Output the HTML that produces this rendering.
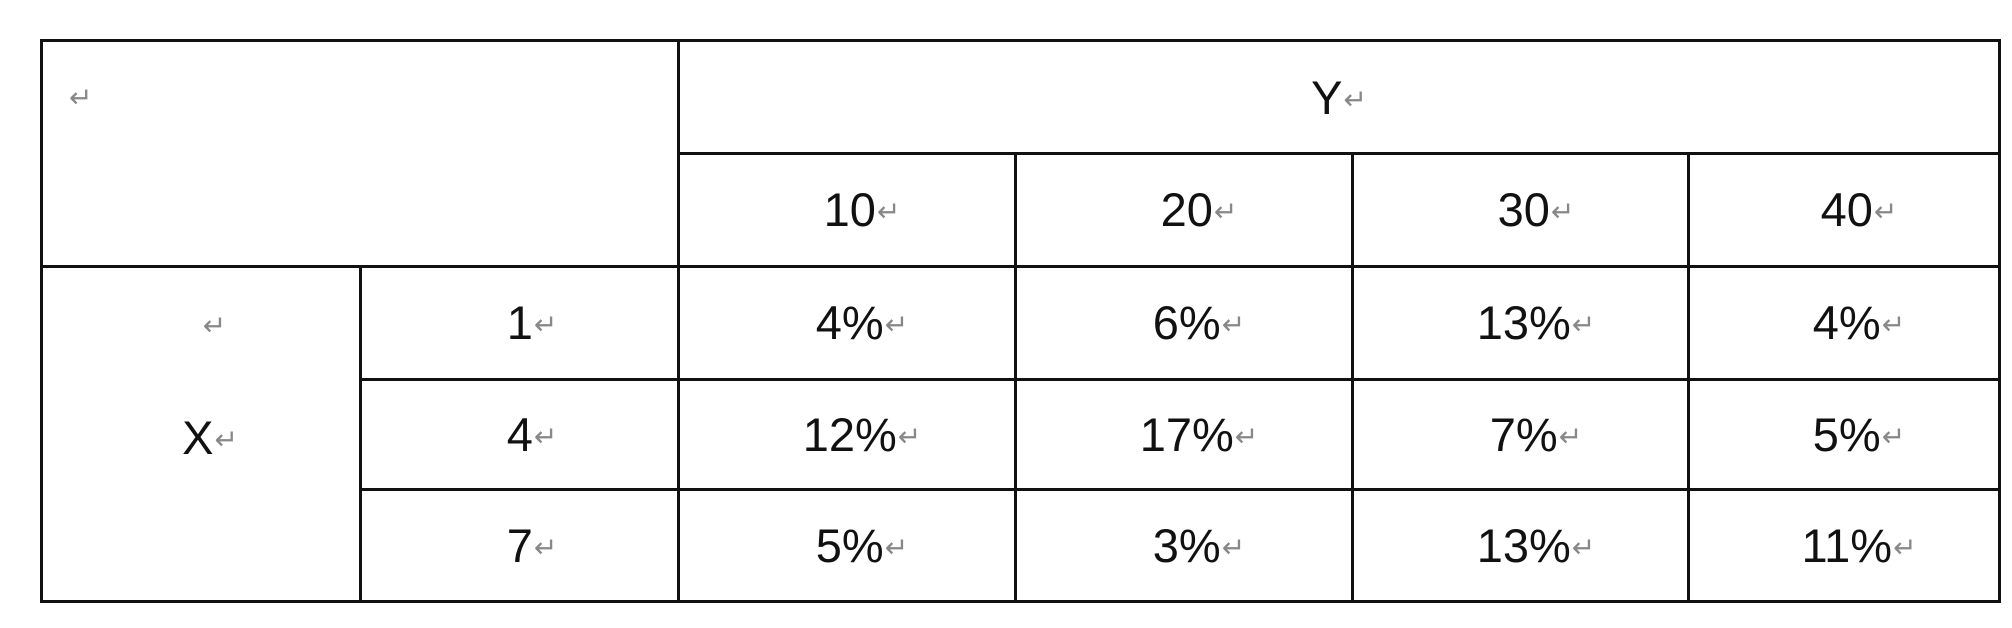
<!DOCTYPE html>
<html><head><meta charset="utf-8"><style>
body{margin:0;width:2012px;height:628px;background:#fff;position:relative;overflow:hidden;font-family:"Liberation Sans",Arial,sans-serif}
.h,.v{position:absolute;background:#111}
.h{height:3px}.v{width:3px}
.t{position:absolute;font-size:47px;color:#111;white-space:nowrap;transform:translateX(-50%);line-height:1}
.a{color:#888;font-size:28px;margin-left:1px;vertical-align:5px}
</style></head><body>
<div class="h" style="left:40px;width:1961px;top:39px"></div>
<div class="h" style="left:677px;width:1324px;top:152px"></div>
<div class="h" style="left:40px;width:1961px;top:265px"></div>
<div class="h" style="left:359px;width:1642px;top:378px"></div>
<div class="h" style="left:359px;width:1642px;top:488px"></div>
<div class="h" style="left:40px;width:1961px;top:600px"></div>
<div class="v" style="left:40px;top:39px;height:564px"></div>
<div class="v" style="left:359px;top:265px;height:338px"></div>
<div class="v" style="left:677px;top:39px;height:564px"></div>
<div class="v" style="left:1014px;top:152px;height:451px"></div>
<div class="v" style="left:1351px;top:152px;height:451px"></div>
<div class="v" style="left:1687px;top:152px;height:451px"></div>
<div class="v" style="left:1998px;top:39px;height:564px"></div>

<div class="t" style="left:68px;top:72px;transform:none"><span class="a">↵</span></div>
<div class="t" style="left:1339px;top:74px">Y<span class="a">↵</span></div>
<div class="t" style="left:214px;top:300px"><span class="a">↵</span></div>
<div class="t" style="left:210px;top:414px">X<span class="a">↵</span></div>

<div class="t" style="left:862px;top:186px">10<span class="a">↵</span></div>
<div class="t" style="left:1199px;top:186px">20<span class="a">↵</span></div>
<div class="t" style="left:1536px;top:186px">30<span class="a">↵</span></div>
<div class="t" style="left:1859px;top:186px">40<span class="a">↵</span></div>

<div class="t" style="left:532px;top:299px">1<span class="a">↵</span></div>
<div class="t" style="left:862px;top:299px">4%<span class="a">↵</span></div>
<div class="t" style="left:1199px;top:299px">6%<span class="a">↵</span></div>
<div class="t" style="left:1536px;top:299px">13%<span class="a">↵</span></div>
<div class="t" style="left:1859px;top:299px">4%<span class="a">↵</span></div>

<div class="t" style="left:532px;top:411px">4<span class="a">↵</span></div>
<div class="t" style="left:862px;top:411px">12%<span class="a">↵</span></div>
<div class="t" style="left:1199px;top:411px">17%<span class="a">↵</span></div>
<div class="t" style="left:1536px;top:411px">7%<span class="a">↵</span></div>
<div class="t" style="left:1859px;top:411px">5%<span class="a">↵</span></div>

<div class="t" style="left:532px;top:522px">7<span class="a">↵</span></div>
<div class="t" style="left:862px;top:522px">5%<span class="a">↵</span></div>
<div class="t" style="left:1199px;top:522px">3%<span class="a">↵</span></div>
<div class="t" style="left:1536px;top:522px">13%<span class="a">↵</span></div>
<div class="t" style="left:1859px;top:522px">11%<span class="a">↵</span></div>
</body></html>
